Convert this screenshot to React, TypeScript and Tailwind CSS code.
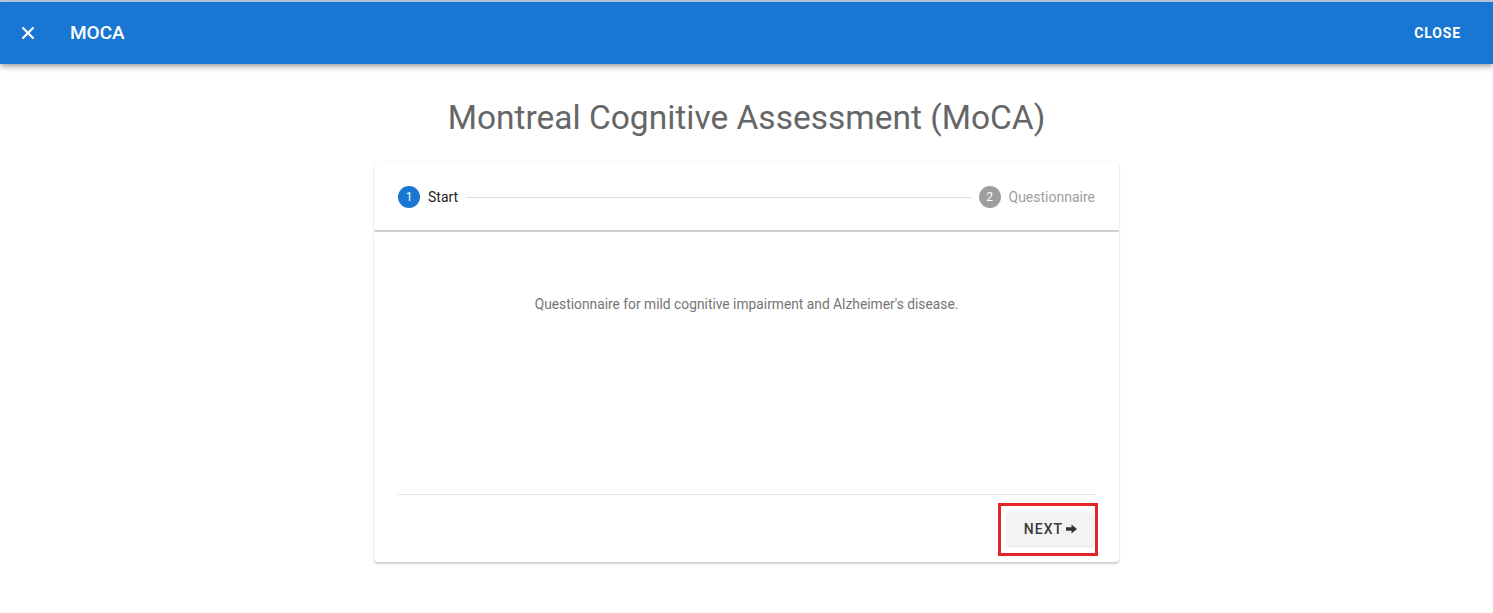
import { X } from "lucide-react";

const App = () => {
    return (
        <div className="min-h-screen bg-white font-['Roboto',sans-serif]">
            {/* app bar */}
            <div className="h-[2px] bg-[#b7cce6]"></div>
            <div className="flex h-[62px] items-center bg-[#1976d2] pl-[18px] pr-8 text-white shadow-[0_2px_4px_-1px_rgba(0,0,0,0.2),0_4px_5px_0_rgba(0,0,0,0.14),0_1px_10px_0_rgba(0,0,0,0.12)]">
                <X size={20} strokeWidth={2.5} />
                <div className="ml-[32px] text-[19px] font-medium">MOCA</div>
                <div className="ml-auto text-[14px] font-bold tracking-[0.06em]">
                    CLOSE
                </div>
            </div>

            <h1 className="mt-[33px] text-center text-[33.5px] font-normal leading-[42px] text-[#666666]">
                Montreal Cognitive Assessment (MoCA)
            </h1>

            <div className="mx-auto mt-[23px] w-[745px]">
                {/* stepper */}
                <div className="flex items-center rounded-t bg-white px-6 pb-[22px] pt-[24px] shadow-[0_2px_2px_0_rgba(0,0,0,0.2),0_0_2px_0_rgba(0,0,0,0.08)]">
                    <div className="flex items-center">
                        <div className="flex h-[22px] w-[22px] items-center justify-center rounded-full bg-[#1976d2] text-[12px] text-white">
                            1
                        </div>
                        <span className="ml-2 text-[14px] text-[#222]">Start</span>
                    </div>
                    <div className="mx-2 h-px flex-1 bg-[#dcdcdc]"></div>
                    <div className="flex items-center">
                        <div className="flex h-[22px] w-[22px] items-center justify-center rounded-full bg-[#9e9e9e] text-[12px] text-white">
                            2
                        </div>
                        <span className="ml-2 text-[14px] text-[#9e9e9e]">
                            Questionnaire
                        </span>
                    </div>
                </div>

                {/* body */}
                <div className="mt-[2px] flex h-[330px] flex-col rounded-b bg-white px-[23px] shadow-[0_2px_2px_0_rgba(0,0,0,0.18),0_0_2px_0_rgba(0,0,0,0.1)]">
                    <p className="mt-[62px] text-center text-[13.8px] text-[#757575]">
                        Questionnaire for mild cognitive impairment and Alzheimer's disease.
                    </p>
                    <div className="mt-auto h-px bg-[#e5e5e5]"></div>
                    <div className="-mr-[2px] flex justify-end pb-[6px] pt-[8px]">
                        <div className="border-[3px] border-[#e52629] pb-[7px] pl-[6px] pr-px pt-[6px]">
                            <button className="flex h-[34px] items-center rounded bg-[#f3f3f3] px-[17px] text-[14px] font-medium tracking-[0.07em] text-[#3a3a3a] shadow-[0_1px_2px_rgba(0,0,0,0.12)]">
                                NEXT
                                <svg
                                    width="11"
                                    height="10"
                                    viewBox="0 0 11 10"
                                    className="ml-[3px]"
                                >
                                    <path d="M0 3.3h5.5V0.5L11 5 5.5 9.5V6.7H0z" fill="#333" />
                                </svg>
                            </button>
                        </div>
                    </div>
                </div>
            </div>
        </div>
    );
};

export default App;
